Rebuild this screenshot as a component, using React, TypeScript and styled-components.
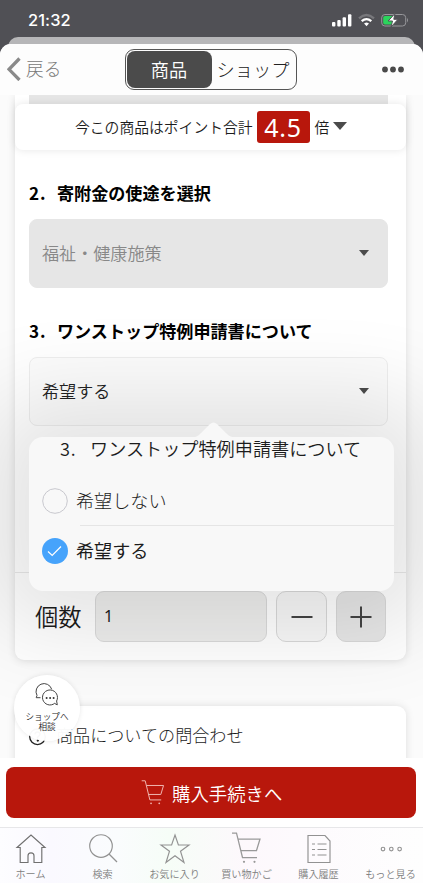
import React from "react";
import styled, { createGlobalStyle } from "styled-components";

const GlobalStyle = createGlobalStyle`
  * { box-sizing: border-box; }
  html, body { margin: 0; padding: 0; }
  body { font-family: "Noto Sans CJK JP", "Noto Sans", sans-serif; color: #1c1c1c; }
  button { font: inherit; color: inherit; background: none; border: 0; padding: 0; }
  svg { display: block; flex: none; }
`;

const Phone = styled.div`
  width: 423px;
  height: 883px;
  overflow: hidden;
  display: flex;
  flex-direction: column;
  background: #505055;
`;

const StatusBar = styled.header`
  height: 37px;
  flex: none;
  display: flex;
  justify-content: space-between;
  padding: 0 14px 0 28px;
`;

const Clock = styled.span`
  font: 550 16.4px/41px Inter, sans-serif;
  letter-spacing: 0.1px;
  color: #fff;
`;

const StatusIcons = styled.div`
  display: flex;
  gap: 6px;
  padding-top: 13px;
`;

const BackSheet = styled.div`
  height: 17px;
  margin: 0 8px -10px;
  flex: none;
  border-radius: 10px 10px 0 0;
  background: #b6b6b8;
`;

const Sheet = styled.main`
  flex: 1;
  min-height: 0;
  display: flex;
  flex-direction: column;
  border-radius: 11px 11px 0 0;
  overflow: hidden;
  background: #fff;
`;

const NavBar = styled.nav`
  height: 51px;
  flex: none;
  display: grid;
  grid-template-columns: 125px 172px 1fr;
  background: #fdfdfd;
`;

const BackButton = styled.button`
  display: flex;
  align-items: flex-start;
  gap: 5px;
  padding: 13px 0 0 7px;
  font-size: 17.7px;
  line-height: 23px;
  font-weight: 300;
  color: #777;
`;

const Segments = styled.div`
  height: 41px;
  margin-top: 5px;
  padding: 1px;
  display: grid;
  grid-template-columns: 85px 1fr;
  border: 1px solid #555;
  border-radius: 9px;
`;

const Segment = styled.button<{ $active?: boolean }>`
  padding-right: 1px;
  font-size: 18.2px;
  line-height: 34px;
  padding-bottom: 2px;
  font-weight: ${(p) => (p.$active ? 350 : 300)};
  border-radius: 8px;
  white-space: nowrap;
  color: ${(p) => (p.$active ? "#fff" : "#222")};
  background: ${(p) => (p.$active ? "#4b4b4b" : "transparent")};
`;

const MoreButton = styled.button`
  justify-self: end;
  align-self: start;
  padding: 22px 19px 0 0;
`;

const Content = styled.section`
  height: 663px;
  flex: none;
  position: relative;
  overflow: hidden;
  padding: 0 17px 0 15px;
  background: #fbfbfb;
`;

const FormCard = styled.div`
  height: 565px;
  padding: 0 18px 0 14px;
  border-radius: 0 0 9px 9px;
  background: #fff;
  box-shadow: 0 1px 9px rgba(0, 0, 0, 0.12);
`;

const PreviousField = styled.div`
  height: 9px;
  background: #e6e6e6;
`;

const PointBar = styled.div`
  height: 46px;
  margin: 0 -18px 0 -14px;
  padding: 0 0 2px 60px;
  display: flex;
  align-items: center;
  border-radius: 8px;
  font-size: 14.8px;
  font-weight: 350;
  white-space: nowrap;
  background: #fff;
  box-shadow: 0 0 8px rgba(0, 0, 0, 0.1);
`;

const Rate = styled.span`
  width: 53px;
  height: 32px;
  margin: 1px 5px 0 4px;
  border-radius: 3px;
  font: 25px/32px "Noto Sans", sans-serif;
  letter-spacing: 0.8px;
  text-align: center;
  color: #fff;
  background: #b8170c;
`;

const Caret = styled.svg`
  margin-left: 4px;
`;

const Heading = styled.h2<{ $top: number }>`
  margin: ${(p) => p.$top}px 0 0;
  height: 24px;
  display: flex;
  font-size: 17.1px;
  line-height: 23px;
  font-weight: 600;
  white-space: nowrap;
  color: #000;
`;

const Number = styled.span<{ $width: number }>`
  width: ${(p) => p.$width}px;
  letter-spacing: 0.8px;
  flex: none;
`;

const Select = styled.div<{ $disabled?: boolean }>`
  height: 69px;
  width: 359px;
  margin-top: 14px;
  padding: 0 18px 2px 12px;
  display: flex;
  align-items: center;
  justify-content: space-between;
  border: 1px solid ${(p) => (p.$disabled ? "#e6e6e6" : "#eeeeee")};
  border-radius: 8px;
  font-size: 17.1px;
  font-weight: 350;
  color: ${(p) => (p.$disabled ? "#888" : "#222")};
  background: ${(p) => (p.$disabled ? "#e6e6e6" : "#fcfcfc")};
`;

const Divider = styled.hr`
  height: 1px;
  margin: 146px -18px 0 -14px;
  border: 0;
  background: #e9e9e9;
`;

const QuantityRow = styled.div`
  display: grid;
  grid-template-columns: 60px 173px 51px 50px;
  margin: 18px 0 0 6px;
  height: 51px;
  align-items: center;
`;

const QuantityLabel = styled.label`
  font-size: 23.3px;
  line-height: 30px;
  padding-bottom: 2px;
  font-weight: 350;
`;

const QuantityValue = styled.div`
  width: 172px;
  height: 51px;
  padding-left: 8px;
  border: 1px solid #dadada;
  border-radius: 9px;
  font: 16px/49px "Noto Sans", sans-serif;
  background: #eeeeed;
`;

const StepButton = styled.button<{ $dark?: boolean }>`
  width: ${(p) => (p.$dark ? 50 : 51)}px;
  height: 51px;
  margin-left: ${(p) => (p.$dark ? 17 : 8)}px;
  display: grid;
  place-items: center;
  border: 1px solid #d9d9d9;
  border-radius: 10px;
  background: ${(p) => (p.$dark ? "#e7e7e7" : "#f8f8f8")};
`;

const ContactCard = styled.div`
  height: 70px;
  margin-top: 46px;
  padding: 16px 0 0 14px;
  display: flex;
  align-items: flex-start;
  gap: 10px;
  border-radius: 9px 9px 0 0;
  font-size: 17.1px;
  line-height: 25px;
  font-weight: 300;
  background: #fff;
  box-shadow: 0 0 8px rgba(0, 0, 0, 0.12);
`;

const ContactIcon = styled.svg`
  margin-top: 6px;
`;

const Popover = styled.div`
  position: absolute;
  left: 29px;
  top: 342px;
  width: 365px;
  height: 154px;
  border-radius: 14px;
  background: #f8f8f8;
  box-shadow: 0 0 90px 40px rgba(0, 0, 0, 0.108);
`;

const PopoverArrow = styled.svg`
  position: absolute;
  left: 163px;
  top: -15px;
`;

const PopoverTitle = styled.div`
  display: flex;
  position: relative;
  height: 24px;
  padding-left: 31px;
  font-size: 18.15px;
  line-height: 23px;
  font-weight: 350;
  white-space: nowrap;
`;

const OptionList = styled.div`
  padding: 15px 0 0 13px;
`;

const Option = styled.div<{ $selected?: boolean }>`
  height: 50px;
  display: grid;
  grid-template-columns: 34px 1fr;
  align-items: center;
  font-size: 18.1px;
  font-weight: ${(p) => (p.$selected ? 400 : 300)};
`;

const OptionLabel = styled.span`
  padding-bottom: 2px;
`;

const OptionRule = styled.div`
  height: 1px;
  margin: -1px 0 0 38px;
  background: #e5e5e5;
`;

const ChatBubble = styled.button`
  position: absolute;
  left: 14px;
  top: 580px;
  width: 66px;
  height: 66px;
  display: flex;
  flex-direction: column;
  align-items: center;
  padding-top: 8px;
  border-radius: 50%;
  font-size: 8.6px;
  line-height: 10px;
  background: rgba(255, 255, 255, 0.97);
  box-shadow: 0 0 5px rgba(0, 0, 0, 0.1);
`;

const ChatText = styled.span`
  margin-top: 5px;
  font-weight: 350;
`;

const PurchaseArea = styled.div`
  height: 69px;
  flex: none;
  padding: 9px 7px 0 6px;
  background: #fff;
`;

const PurchaseButton = styled.button`
  width: 100%;
  height: 51px;
  display: flex;
  align-items: center;
  padding-left: 135px;
  gap: 7px;
  border-radius: 8px;
  font-size: 18.4px;
  font-weight: 350;
  color: #fff;
  background: #b8170c;
`;

const TabBar = styled.footer`
  flex: 1;
  display: grid;
  grid-template-columns: repeat(6, 72px);
  justify-content: center;
  border-top: 1px solid #e7e7e9;
  background: linear-gradient(90deg, #fdfdff, #faf9ff 12%, #fafcfd 28%, #f6fdf7 40%, #fdf8fc 58%, #fdfafd 70%, #fefefe);
`;

const Tab = styled.button`
  display: flex;
  flex-direction: column;
  align-items: center;
  padding: 4px 2px 0 0;
  gap: 3px;
  font-size: 10.1px;
  line-height: 14px;
  font-weight: 350;
  white-space: nowrap;
  color: #808080;
`;

const ARROW = "M0 0H10L5 6Z";

function CartIcon({ width, height, stroke }: { width: number; height: number; stroke: string }) {
  return (
    <svg width={width} height={height} viewBox="0 0 29 32" fill="none" stroke={stroke} strokeWidth="1.25">
      <path d="M0 1H4.5L10.5 25.5H25M6 7H28L24.5 18.5H8.8" />
      <circle cx="12" cy="29.8" r="1.1" fill={stroke} stroke="none" />
      <circle cx="22.5" cy="29.8" r="1.1" fill={stroke} stroke="none" />
    </svg>
  );
}

function TabIcon({ name }: { name: string }) {
  if (name === "cart") return <CartIcon width={29} height={32} stroke="#999" />;
  const paths: Record<string, React.ReactNode> = {
    home: <path d="M2 15.5L16 3L30 15.5H26.8V30.5H19V23.8Q19 20.8 16 20.8T13 23.8V30.5H5.2V15.5Z" />,
    search: <><circle cx="14" cy="14" r="11.3" /><path d="M22 22L30 30" /></>,
    star: <path d="M16 3L19.4 13H30L21.5 19.2L25 30.5L16 23.7L7 30.5L10.5 19.2L2 13H12.6Z" />,
    history: <><path d="M5 3.5H22L27 9V30.5H5Z" /><path d="M9 12H12M14.5 12H23.5M9 17.5H12M14.5 17.5H23.5M9 23H12M14.5 23H23.5" /></>,
    more: <><circle cx="8" cy="17" r="1.8" /><circle cx="16.3" cy="17" r="1.8" /><circle cx="24.6" cy="17" r="1.8" /></>,
  };
  return (
    <svg width="32" height="32" viewBox="0 0 32 32" fill="none" stroke={name === "home" ? "#707070" : "#929292"} strokeWidth="1.15">
      {paths[name]}
    </svg>
  );
}

const tabs = [
  { icon: "home", label: "ホーム" },
  { icon: "search", label: "検索" },
  { icon: "star", label: "お気に入り" },
  { icon: "cart", label: "買い物かご" },
  { icon: "history", label: "購入履歴" },
  { icon: "more", label: "もっと見る" },
];

export default function App() {
  return (
    <>
      <GlobalStyle />
      <Phone>
        <StatusBar>
          <Clock>21:32</Clock>
          <StatusIcons>
            <svg width="20" height="14" viewBox="0 0 20 14" fill="#fff">
              <rect x="0" y="9" width="3.4" height="4.5" rx="1" />
              <rect x="5.3" y="7" width="3.4" height="6.5" rx="1" />
              <rect x="10.6" y="4.2" width="3.4" height="9.3" rx="1" />
              <rect x="16" y="1.3" width="3.4" height="12.2" rx="1" />
            </svg>
            <svg width="17" height="14" viewBox="0 0 17 14" fill="none" strokeWidth="2.3">
              <path d="M1 5.3Q8.5-1.3 16 5.3" stroke="#77777b" />
              <path d="M3.7 8.2Q8.5 4 13.3 8.2" stroke="#fff" />
              <path d="M8.5 12L7.3 10.7Q8.5 10 9.7 10.7Z" fill="#fff" stroke="#fff" strokeWidth="1.6" />
            </svg>
            <svg width="28" height="15" viewBox="0 0 28 15">
              <rect x=".7" y="1.5" width="24" height="11.5" rx="3.2" fill="none" stroke="#97979b" />
              <path d="M4 3H13V11.5H4Q2.2 11.5 2.2 9.7V4.8Q2.2 3 4 3Z" fill="#2bd45c" />
              <path d="M14 .5L7.2 8H11.5L10 14L17 6.3H12.8Z" fill="#fff" stroke="#505055" strokeWidth="1" />
              <path d="M26 5Q28 7.2 26 9.4Z" fill="#97979b" />
            </svg>
          </StatusIcons>
        </StatusBar>
        <BackSheet />
        <Sheet>
          <NavBar>
            <BackButton>
              <svg width="14" height="24" viewBox="0 0 14 24" fill="none" stroke="#8a8a8a" strokeWidth="3.3">
                <path d="M12.5 1.5L2 12.3L12.5 23" />
              </svg>
              戻る
            </BackButton>
            <Segments>
              <Segment $active>商品</Segment>
              <Segment>ショップ</Segment>
            </Segments>
            <MoreButton aria-label="メニュー">
              <svg width="22" height="7" viewBox="0 0 22 7" fill="#4a4a4a">
                <circle cx="3" cy="3.5" r="2.9" /><circle cx="11" cy="3.5" r="2.9" /><circle cx="19" cy="3.5" r="2.9" />
              </svg>
            </MoreButton>
          </NavBar>
          <Content>
            <FormCard>
              <PreviousField />
              <PointBar>
                今この商品はポイント合計
                <Rate>4.5</Rate>
                倍
                <Caret width="14" height="8" viewBox="0 0 10 6" fill="#4b4b4b" preserveAspectRatio="none"><path d={ARROW} /></Caret>
              </PointBar>
              <Heading $top={31}><Number $width={28}>2.</Number>寄附金の使途を選択</Heading>
              <Select $disabled>
                福祉・健康施策
                <svg width="10" height="6" fill="#4b4b4b"><path d={ARROW} /></svg>
              </Select>
              <Heading $top={31}><Number $width={28}>3.</Number>ワンストップ特例申請書について</Heading>
              <Select>
                希望する
                <svg width="10" height="6" fill="#4b4b4b"><path d={ARROW} /></svg>
              </Select>
              <Divider />
              <QuantityRow>
                <QuantityLabel>個数</QuantityLabel>
                <QuantityValue>1</QuantityValue>
                <StepButton aria-label="減らす">
                  <svg width="22" height="22" stroke="#444" strokeWidth="2"><path d="M.5 11H21.5" /></svg>
                </StepButton>
                <StepButton $dark aria-label="増やす">
                  <svg width="22" height="22" stroke="#444" strokeWidth="2"><path d="M.5 11H21.5M11 .5V21.5" /></svg>
                </StepButton>
              </QuantityRow>
            </FormCard>
            <ContactCard>
              <ContactIcon width="17" height="18" viewBox="0 0 17 18" fill="none" stroke="#222" strokeWidth="1.3">
                <circle cx="8.5" cy="8.8" r="7.8" />
                <path d="M6 6.5Q6 4 8.5 4T11 6.3Q11 7.5 8.5 9.2V10.5" />
                <circle cx="8.8" cy="12.6" r=".5" fill="#222" />
              </ContactIcon>
              商品についての問合わせ
            </ContactCard>
            <Popover>
              <PopoverArrow width="44" height="16" viewBox="0 0 44 16" fill="#f8f8f8">
                <path d="M0 15.5Q5 15.5 8.5 11.5L18 2Q21.5-1 25 2L34.5 11.5Q38 15.5 44 15.5Z" />
              </PopoverArrow>
              <PopoverTitle><Number $width={30}>3.</Number>ワンストップ特例申請書について</PopoverTitle>
              <OptionList>
                <Option>
                  <svg width="26" height="26" fill="none" stroke="#c8c8ce"><circle cx="13" cy="13" r="12.3" /></svg>
                  <OptionLabel>希望しない</OptionLabel>
                </Option>
                <OptionRule />
                <Option $selected>
                  <svg width="26" height="26" fill="none" stroke="#fff" strokeWidth="1.2">
                    <circle cx="13" cy="13" r="13" fill="#46a3fb" stroke="none" />
                    <path d="M6 13.5L10.2 17.5L19 8.5" />
                  </svg>
                  <OptionLabel>希望する</OptionLabel>
                </Option>
              </OptionList>
            </Popover>
            <ChatBubble>
              <svg width="24" height="23" viewBox="0 0 24 23" fill="none" stroke="#444" strokeWidth="1">
                <path d="M5.5 14.7H1.2L2 12.4A8 8 0 1 1 16.7 6.3" />
                <path d="M19.7 20.3A7.5 7.5 0 1 1 21.6 18L22.3 21.8Q21 21.5 19.7 20.3Z" />
                <g fill="#333" stroke="none"><circle cx="11.6" cy="15" r="1" /><circle cx="15.1" cy="15" r="1" /><circle cx="18.6" cy="15" r="1" /></g>
              </svg>
              <ChatText>ショップへ<br />相談</ChatText>
            </ChatBubble>
          </Content>
          <PurchaseArea>
            <PurchaseButton>
              <CartIcon width={24} height={25} stroke="#f1b8b3" />
              購入手続きへ
            </PurchaseButton>
          </PurchaseArea>
          <TabBar>
            {tabs.map((tab) => (
              <Tab key={tab.icon}>
                <TabIcon name={tab.icon} />
                {tab.label}
              </Tab>
            ))}
          </TabBar>
        </Sheet>
      </Phone>
    </>
  );
}
